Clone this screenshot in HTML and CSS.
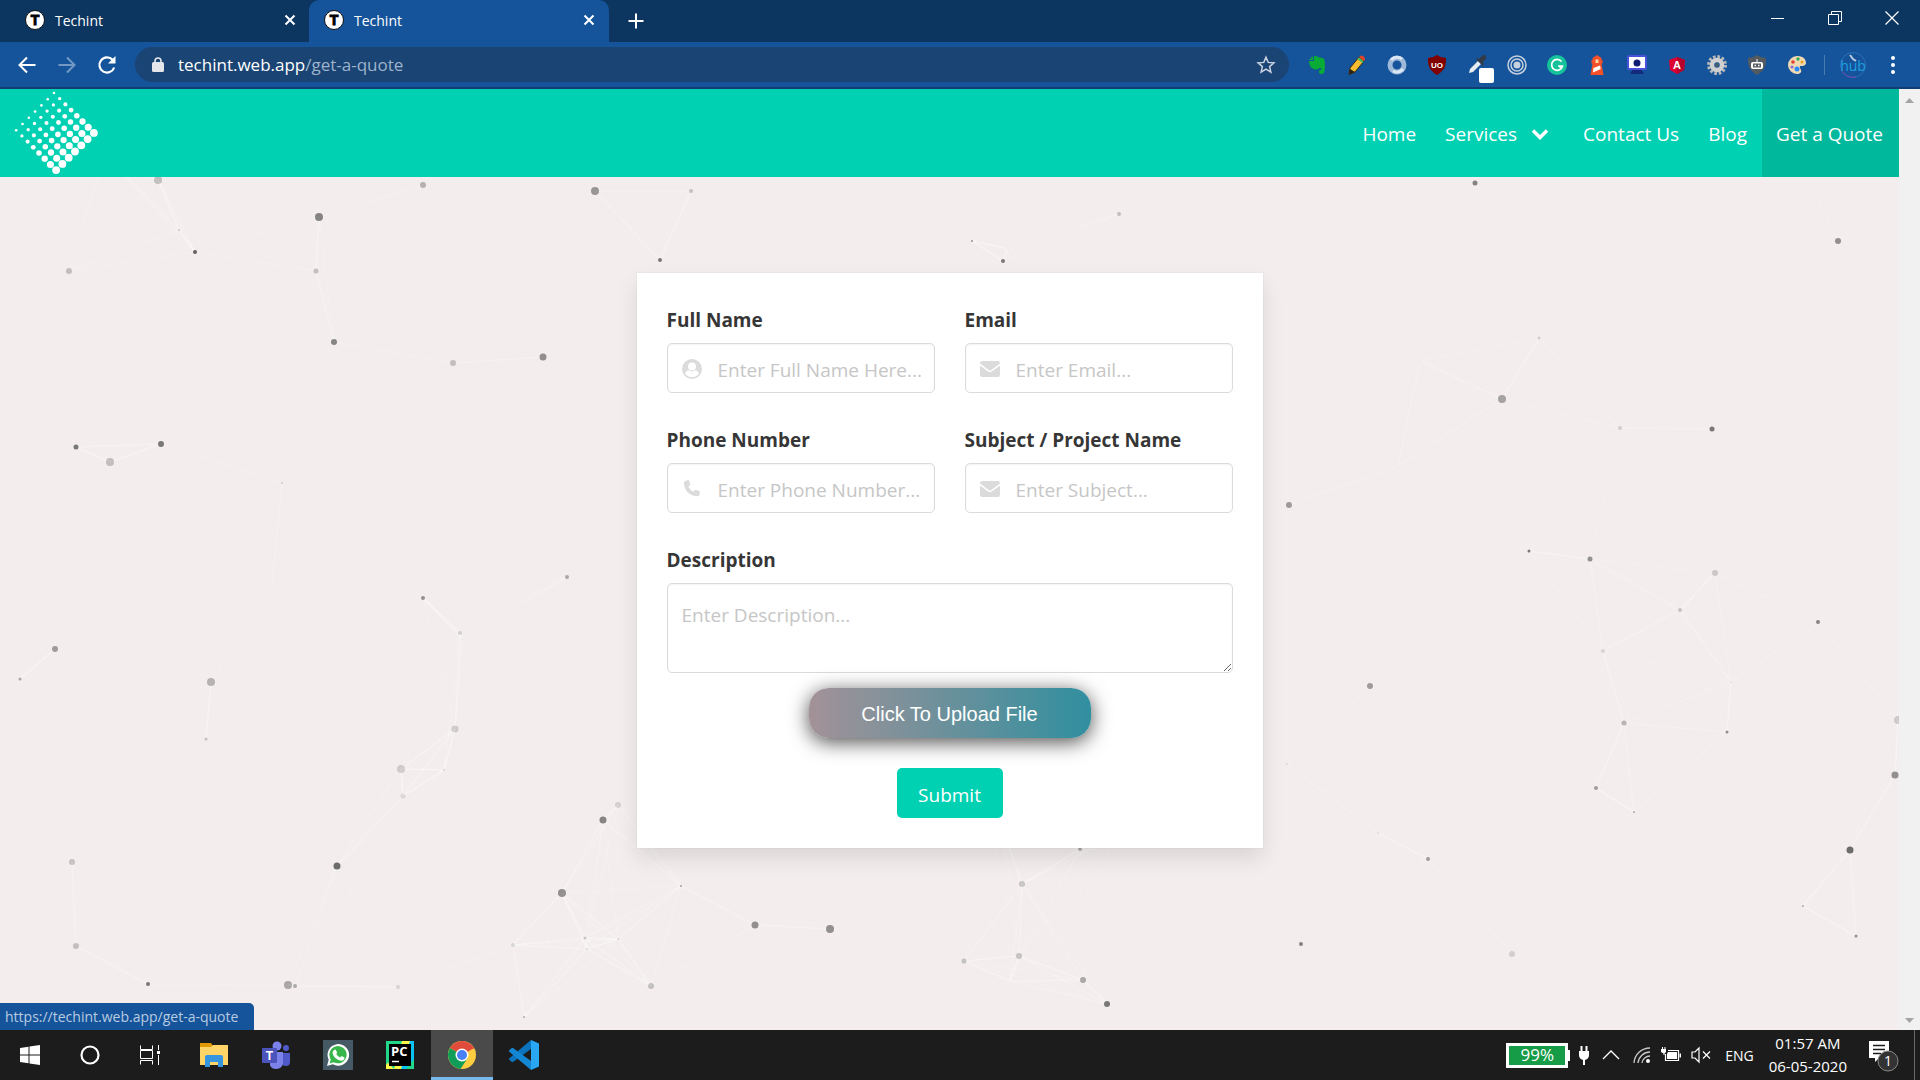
FILE: index.html
```html
<!DOCTYPE html>
<html lang="en">
<head>
<meta charset="utf-8">
<title>Techint</title>
<link rel="stylesheet" href="styles.css">
</head>
<body>
<svg class="defs" aria-hidden="true">
  <symbol id="cross" viewBox="0 0 12 12"><path d="M1.500 1.500l9 9M10.500 1.500l-9 9" stroke="#fff" stroke-width="2" fill="none"/></symbol>
  <symbol id="envelope" viewBox="0 0 20 16"><path d="M2 0h16a2 2 0 0 1 2 2v.6L11 9.200q-1 .6-2 0L0 2.600V2a2 2 0 0 1 2-2zM0 4.400l8.200 6q1.800 1.200 3.600 0l8.200-6V14a2 2 0 0 1-2 2H2a2 2 0 0 1-2-2z" fill="#dbdbdb"/></symbol>
</svg>

<div class="tabstrip">
  <div class="tab">
    <svg class="i20" viewBox="0 0 20 20"><circle cx="10" cy="10" r="9.500" fill="#fff" stroke="#111"/><text x="10" y="15" text-anchor="middle" font-family="Liberation Sans, sans-serif" font-weight="700" font-size="14" fill="#000" stroke="#000" stroke-width="1">T</text></svg><span>Techint</span>
    <button class="bare" aria-label="Close tab"><svg class="i12"><use href="#cross"/></svg></button>
  </div>
  <div class="tab active">
    <svg class="i20" viewBox="0 0 20 20"><circle cx="10" cy="10" r="9.500" fill="#fff" stroke="#111"/><text x="10" y="15" text-anchor="middle" font-family="Liberation Sans, sans-serif" font-weight="700" font-size="14" fill="#000" stroke="#000" stroke-width="1">T</text></svg><span>Techint</span>
    <button class="bare" aria-label="Close tab"><svg class="i12"><use href="#cross"/></svg></button>
  </div>
  <button class="bare newtab" aria-label="New tab"><svg class="i16" viewBox="0 0 16 16"><path d="M8 .5v15M.5 8h15" stroke="#fff" stroke-width="2"/></svg></button>
  <div class="window-controls">
    <button class="bare" aria-label="Minimize"><svg class="i14" viewBox="0 0 14 14"><path d="M0 7.500h13" stroke="#fff"/></svg></button>
    <button class="bare" aria-label="Restore"><svg class="i14" viewBox="0 0 14 14"><path d="M.5 3.500h10v10H.5zM3.500 3.500V.5h10v10h-3" stroke="#fff" fill="none"/></svg></button>
    <button class="bare" aria-label="Close"><svg class="i14" viewBox="0 0 14 14"><path d="M.5.500l13 13M13.500.500l-13 13" stroke="#fff" stroke-width="1.200"/></svg></button>
  </div>
</div>

<div class="toolbar">
  <div class="navigate">
    <button class="bare" aria-label="Back"><svg class="i20" viewBox="0 0 20 20"><path d="M18.500 10H3M10 2.500L2.500 10l7.500 7.500" stroke="#fff" stroke-width="2" fill="none"/></svg></button>
    <button class="bare" aria-label="Forward"><svg class="i20" viewBox="0 0 20 20"><path d="M1.500 10H17M10 2.500l7.500 7.500-7.500 7.500" stroke="#7398c4" stroke-width="2" fill="none"/></svg></button>
    <button class="bare" aria-label="Reload"><svg class="i20" viewBox="0 0 20 20"><path d="M17.200 12.500A7.600 7.600 0 1 1 15.600 4.800" stroke="#fff" stroke-width="2.200" fill="none"/><path d="M18.500 1v7.500H11z" fill="#fff"/></svg></button>
  </div>
  <div class="omnibox">
    <svg class="lock" viewBox="0 0 12 16"><rect x="0" y="5" width="12" height="10" rx="1.500" fill="#e4e6ea"/><path d="M3 6V4a3 3 0 0 1 6 0v2" stroke="#e4e6ea" stroke-width="1.600" fill="none"/></svg>
    <span class="url">techint.web.app<span>/get-a-quote</span></span>
    <svg class="i20" viewBox="0 0 20 20"><path d="M10 2.200l2.200 5.200 5.700.5-4.300 3.700 1.300 5.600L10 14.200l-4.900 3 1.300-5.600L2.100 7.900l5.700-.5z" stroke="#c9d2de" stroke-width="1.500" fill="none"/></svg>
  </div>
  <div class="extensions">
    <svg class="i20" viewBox="0 0 20 20"><path d="M6 1v4H2zM7 1.500c2-1.200 4 0 4.500 1 4 .2 5.500.8 6 2.500.8 4 .6 8-.2 12-.5 2.500-5 2.800-5.300.2-.2-2 1-2.700 2.500-2.500-.2-1.400-1-1.700-2.500-1.700-.5 1.500-2.500 1.700-4.500 1.200C3.500 13.600 2 9 2 6h5z" fill="#09ab37"/></svg>
    <svg class="i20" viewBox="0 0 20 20"><path d="M3 13L12 2l5 4L8 17l-6 2.500z" fill="#f6bd30" stroke="#3a2c10"/><path d="M12 2l2-1.500q4 .5 4 4L17 6z" fill="#e5422c"/><path d="M11 3.200l5 4" stroke="#39b66a" stroke-width="2"/><path d="M3 14l5 3-6 2.500z" fill="#2b2118"/></svg>
    <svg class="i20" viewBox="0 0 20 20"><circle cx="10" cy="10" r="7" fill="none" stroke="#9db8d8" stroke-width="5"/><path d="M4 5a8 8 0 0 1 11-1M16 14a8 8 0 0 1-10 2" stroke="#dbe7f3" stroke-width="3" fill="none"/></svg>
    <svg class="i20" viewBox="0 0 20 20"><path d="M10 0q4 3 9 3c0 8-1 12-9 17C2 15 1 11 1 3q5 0 9-3z" fill="#800000"/><text x="10" y="13" text-anchor="middle" font-family="Liberation Sans, sans-serif" font-weight="700" font-size="8" fill="#fff">UO</text></svg>
    <svg class="i20 over" viewBox="0 0 20 20"><path d="M2 18l1-4 8-8 3 3-8 8z" fill="#e8edf2"/><path d="M9 4l7 7 1-2-1.500-2L19 4q1-2-1-3.500T15 1l-3 3-2-1z" fill="#333c46"/><rect x="12" y="13" width="15" height="15" rx="2" fill="#fff"/></svg>
    <svg class="i20" viewBox="0 0 20 20"><g fill="none" stroke="#c5d1df" stroke-width="1.500"><circle cx="10" cy="10" r="9"/><circle cx="10" cy="10" r="6"/></g><circle cx="10" cy="10" r="3.500" fill="#c5d1df"/></svg>
    <svg class="i20" viewBox="0 0 20 20"><circle cx="10" cy="10" r="10" fill="#15c39a"/><path d="M14.500 6.500A5.500 5.500 0 1 0 15.500 11H11M12.500 12.500l3-1.500" stroke="#fff" stroke-width="1.700" fill="none"/></svg>
    <svg class="i20" viewBox="0 0 20 20"><path d="M5.500 3L10 0l4.500 3v2h1v3.500h-1L16.500 20h-13l2-11.500h-1V5h1z" fill="#f4502a"/><path d="M8.500 4.500h3V8h-3z" fill="#ffd9a8"/><path d="M6.500 13l6.500-2.500.7 3.500-7.700 3.500z" fill="#fff"/></svg>
    <svg class="i20" viewBox="0 0 20 20"><path d="M6 14h8l3 5H3z" fill="#162a7b"/><rect x="1" y="1" width="18" height="13" rx="1" fill="#fff" stroke="#4752d9" stroke-width="2"/><circle cx="10" cy="8" r="3.500" fill="#111d73"/></svg>
    <svg class="i20" viewBox="0 0 20 20"><path d="M10 2l8 3-1 10-7 4-7-4L2 5z" fill="#dd0031"/><path d="M10 2l8 3-1 10-7 4z" fill="#b8002d"/><text x="10" y="14" text-anchor="middle" font-family="Liberation Sans, sans-serif" font-weight="700" font-size="11" fill="#fff">A</text></svg>
    <svg class="i20" viewBox="0 0 20 20"><circle cx="10" cy="10" r="8" fill="none" stroke="#b9b9b9" stroke-width="4" stroke-dasharray="2.500 1.700"/><circle cx="10" cy="10" r="5" fill="none" stroke="#d0d0d0" stroke-width="4.500"/><circle cx="10" cy="10" r="2" fill="#4b5d70"/></svg>
    <svg class="i20" viewBox="0 0 20 20"><path d="M10 0q4 3 9 3c0 8-1 12-9 17C2 15 1 11 1 3q5 0 9-3z" fill="#555a60"/><rect x="4" y="7" width="12" height="7" rx="2" fill="#fff"/><path d="M10 7V4" stroke="#fff"/><rect x="6" y="8.500" width="8" height="4" fill="#555a60"/><path d="M7.500 10.500h1.500M11 10.500h1.500" stroke="#fff" stroke-width="1.500"/></svg>
    <svg class="i20" viewBox="0 0 20 20"><path d="M10 1c6-.5 9 3.500 9 7 0 2.500-3 3-5 3s-1 2 0 4-1 4-4 4A9 9 0 0 1 10 1z" fill="#f0d9b0"/><circle cx="6" cy="7" r="1.800" fill="#e23f35"/><circle cx="11" cy="4" r="1.700" fill="#34a853"/><circle cx="5" cy="12" r="1.600" fill="#8d6fd1"/><circle cx="15" cy="7" r="1.500" fill="#eba21b"/><circle cx="10" cy="14" r="2.500" fill="#2b8cff"/></svg>
  </div>
  <div class="profile">
    <svg class="i28" viewBox="0 0 28 28"><circle cx="14" cy="14" r="12.500" fill="none" stroke="#2b6fb8"/><path d="M3 20a12.500 12.500 0 0 0 14 6" stroke="#7548a8" fill="none"/><text x="14" y="20" text-anchor="middle" font-family="Open Sans, sans-serif" font-size="14" fill="#1ea0e0">hub</text><path d="M11 4l3 4 3 2" stroke="#b9cbe0" stroke-width="2" fill="none"/></svg>
    <button class="bare" aria-label="Menu"><svg class="dots" viewBox="0 0 4 18"><g fill="#fff"><circle cx="2" cy="2" r="2"/><circle cx="2" cy="9" r="2"/><circle cx="2" cy="16" r="2"/></g></svg></button>
  </div>
</div>

<div class="viewport">
  <div class="page">
    <svg class="particles" id="particles" aria-hidden="true"></svg>
    <header class="navbar">
      <a class="brand" href="#" aria-label="Techint"><svg class="logo" id="logo" viewBox="0 0 90 88" fill="#fff"></svg></a>
      <nav>
        <a href="#">Home</a>
        <a href="#" class="has-menu">Services <svg class="chevron" viewBox="0 0 18 12"><path d="M2 2.500l7 7 7-7" fill="none" stroke="#fff" stroke-width="3.500"/></svg></a>
        <a href="#">Contact Us</a>
        <a href="#">Blog</a>
        <a href="#" class="current">Get a Quote</a>
      </nav>
    </header>
    <main>
      <form class="card">
        <div class="field">
          <label for="name">Full Name</label>
          <div class="control"><svg class="i20" viewBox="0 0 20 20"><circle cx="10" cy="10" r="10" fill="#dbdbdb"/><path d="M3 14.500q1-3 3.500-3.500a5 5 0 0 0 7 0q2.500.5 3.500 3.500a8.300 8.300 0 0 1-14 0z" fill="#fff"/><circle cx="10" cy="7.500" r="4" fill="#fff"/></svg><input id="name" type="text" placeholder="Enter Full Name Here..."></div>
        </div>
        <div class="field">
          <label for="email">Email</label>
          <div class="control"><svg class="i20"><use href="#envelope"/></svg><input id="email" type="email" placeholder="Enter Email..."></div>
        </div>
        <div class="field">
          <label for="phone">Phone Number</label>
          <div class="control"><svg class="i20" viewBox="0 0 20 20"><path d="M2.500 2.500L6 1q1 0 1.200.8l1 3.500q0 .8-.7 1.200L6.300 7.500q1.500 3.900 5.200 5.200l1.200-1.500q.5-.6 1.200-.4l3.500 1.500q.8.400.6 1.200l-.8 3q-.3.800-1.200.8Q3 16.500 1.800 3.700q-.1-.8.700-1.200z" fill="#dbdbdb"/></svg><input id="phone" type="tel" placeholder="Enter Phone Number..."></div>
        </div>
        <div class="field">
          <label for="subject">Subject / Project Name</label>
          <div class="control"><svg class="i20"><use href="#envelope"/></svg><input id="subject" type="text" placeholder="Enter Subject..."></div>
        </div>
        <div class="field wide">
          <label for="description">Description</label>
          <textarea id="description" placeholder="Enter Description..."></textarea>
        </div>
        <div class="actions wide">
          <button type="button" class="upload">Click To Upload File</button>
          <button type="submit" class="submit">Submit</button>
        </div>
      </form>
    </main>
    <div class="status">https://techint.web.app/get-a-quote</div>
  </div>
  <div class="scrollbar">
    <svg class="arrow" viewBox="0 0 9 5"><path d="M0 5h9L4.500 0z" fill="#a3a3a3"/></svg>
    <svg class="arrow" viewBox="0 0 9 5"><path d="M0 0h9L4.500 5z" fill="#a3a3a3"/></svg>
  </div>
</div>

<footer class="taskbar">
  <div class="system-apps">
    <button class="bare" aria-label="Start"><svg class="i20" viewBox="0 0 20 20"><path d="M0 3l8.500-1.300V9.500H0zM9.500 1.500L20 0v9.500H9.500zM0 10.500h8.500v7.800L0 17zM9.500 10.500H20V20L9.500 18.500z" fill="#fff"/></svg></button>
    <button class="bare" aria-label="Search"><svg class="i20" viewBox="0 0 20 20"><circle cx="10" cy="10" r="8.500" fill="none" stroke="#fff" stroke-width="2.200"/></svg></button>
    <button class="bare" aria-label="Task view"><svg class="i20" viewBox="0 0 20 20"><path d="M.5.500v4h12v-4M.5 19.500v-4h12v4M.5 5.500h12v8H.5zM18.500 0v5M18.500 10v10" stroke="#fff" fill="none"/><rect x="17" y="6" width="3" height="3" fill="#fff"/></svg></button>
  </div>
  <div class="pinned-apps">
    <button class="bare" aria-label="File Explorer"><svg class="i28" viewBox="0 0 28 28"><path d="M0 2h11l2 3v4H0z" fill="#e09a06"/><path d="M0 6h11l2-2h15v20H0z" fill="#ffd568"/><path d="M5 26V16q0-2 2-2h14q2 0 2 2v10h-5v-5h-8v5z" fill="#3595de"/></svg></button>
    <button class="bare" aria-label="Teams"><svg class="i28" viewBox="0 0 28 28"><circle cx="24" cy="7" r="3" fill="#5059c9"/><path d="M19 12h9v9q0 4-4 4t-5-4z" fill="#5059c9"/><circle cx="15" cy="5" r="4.500" fill="#7b83eb"/><path d="M9 11h12v10q0 7-7 7t-6-7z" fill="#7b83eb"/><rect y="7" width="15" height="15" rx="1" fill="#4b53bc"/><text x="7.500" y="19" text-anchor="middle" font-family="Liberation Sans, sans-serif" font-weight="700" font-size="12" fill="#fff">T</text></svg></button>
    <button class="bare" aria-label="WhatsApp"><svg class="i30" viewBox="0 0 30 30"><rect width="30" height="30" fill="#455a64"/><path d="M4 26l1.700-6.200a10.800 10.800 0 1 1 4.200 4.400z" fill="#fff"/><path d="M6.600 23.400l1.200-4a8.600 8.600 0 1 1 3 2.800z" fill="#38b64a"/><path d="M11 10l1.600-.4 1.600 3.200-1 1.300q1.500 2.600 4 3.400l1.300-1.500 3 1.400q.4 3-3.500 3.400-7-1.400-8.500-7.800.2-2 1.500-3z" fill="#fff"/></svg></button>
    <button class="bare" aria-label="PyCharm"><svg class="i28" viewBox="0 0 28 28"><rect width="28" height="28" fill="#21d789"/><path d="M16 0h9l3 5v10L16 28H0v-4z" fill="#fcf84a"/><path d="M0 0h16L8 28 0 20z" fill="#21d789"/><path d="M24 0h4v18l-8 10h-5z" fill="#07c3f2"/><rect x="3" y="3" width="22" height="22" fill="#000"/><text x="5" y="15" font-family="Open Sans, sans-serif" font-weight="700" font-size="13" fill="#fff">PC</text><path d="M6 20.500h7" stroke="#fff" stroke-width="1.500"/></svg></button>
    <button class="bare running" aria-label="Chrome"><svg class="i28" viewBox="0 0 28 28"><circle cx="14" cy="14" r="14" fill="#ffcd40"/><path d="M14 14L1.900 7A14 14 0 0 1 26.100 7z" fill="#e14b3c"/><path d="M1.900 7a14 14 0 0 0 10.600 20.900L19.600 17 14 14z" fill="#109d58"/><path d="M14 7.500h12.400L26.100 7 14 5z" fill="#e14b3c"/><circle cx="14" cy="14" r="6.500" fill="#fff"/><circle cx="14" cy="14" r="5" fill="#4a80f5"/></svg></button>
    <button class="bare" aria-label="Visual Studio Code"><svg class="i30" viewBox="0 0 30 30"><path d="M22 0l8 3.500v23L22 30z" fill="#2aa7f2"/><path d="M22 0v9L4 22l-1 .2-3-2.700v-1z" fill="#0b74bd"/><path d="M22 30v-9L4 8l-1-.2-3 2.700v1z" fill="#1487d4"/></svg></button>
  </div>
  <div class="tray">
    <div class="battery">99%</div>
    <svg class="plug" viewBox="0 0 12 20"><path d="M1 6h10v4q0 4-4 5v5H5v-5q-4-1-4-5zM2.500 1h2v5h-2zM7.500 1h2v5h-2z" fill="#fff"/></svg>
    <svg class="i18" viewBox="0 0 18 18"><path d="M1 13l8-8 8 8" stroke="#fff" stroke-width="1.300" fill="none"/></svg>
    <svg class="i18 wifi" viewBox="0 0 18 18"><g fill="none" stroke="#c8c8c8" stroke-width="1.300"><path d="M1 17A16 16 0 0 1 17 2M5 17A12 12 0 0 1 17 6M9 17a8 8 0 0 1 8-7"/></g><circle cx="15" cy="15" r="2" fill="#fff"/></svg>
    <svg class="i20" viewBox="0 0 20 20"><path d="M4.500 9v6.500h13V5.500H7" stroke="#fff" stroke-width="1.200" fill="none"/><path d="M7 7h9v7H6V9zM18.500 8.500h1.500v4h-1.500zM0 4h5v3L3.500 8.500V10h-1V8.500L0 7zM1 2h1v2H1zM3.500 2h1v2h-1z" fill="#fff"/></svg>
    <svg class="i20" viewBox="0 0 20 20"><path d="M1 7h3l4-4v14l-4-4H1zM12 6.500l7 7M19 6.500l-7 7" stroke="#fff" stroke-width="1.200" fill="none"/></svg>
    <span class="lang">ENG</span>
    <div class="clock"><span>01:57 AM</span><span>06-05-2020</span></div>
    <svg class="notice" viewBox="0 0 32 36"><path d="M1 4h20v17H11l-4 4v-4H1z" fill="#fff"/><path d="M5 8.500h12M5 12.500h12M5 16.500h8" stroke="#1c1c1c" stroke-width="1.300"/><circle cx="20" cy="24" r="10" fill="#333" stroke="#888"/><text x="20" y="29" text-anchor="middle" font-family="Open Sans, sans-serif" font-size="14" fill="#fff">1</text></svg>
  </div>
</footer>
<script src="script.js"></script>
</body>
</html>
```

FILE: styles.css
```css
* { box-sizing: border-box; }
body {
  margin: 0;
  min-height: 100vh;
  display: grid;
  grid-template-columns: minmax(0, 1fr);
  grid-template-rows: auto auto 1fr auto;
  font-family: "Open Sans", "Noto Sans", sans-serif;
  font-size: 19px;
  color: #363636;
}
.defs { position: absolute; width: 0; height: 0; }
svg { flex: none; display: block; }
.i12 { width: 12px; height: 12px; }
.i14 { width: 14px; height: 14px; }
.i16 { width: 16px; height: 16px; }
.i18 { width: 18px; height: 18px; }
.i20 { width: 20px; height: 20px; }
.i28 { width: 28px; height: 28px; }
.i30 { width: 30px; height: 30px; }
.over { overflow: visible; }
.bare {
  border: 0;
  padding: 0;
  background: none;
  display: flex;
  align-items: center;
  justify-content: center;
}

/* Browser tabs */
.tabstrip {
  display: flex;
  height: 42px;
  background: #0c3560;
  color: #fff;
  font-size: 14px;
}
.tab {
  display: flex;
  align-items: center;
  gap: 10px;
  width: 300px;
  padding: 0 14px 2px 15px;
}
.tab:first-child { width: 309px; padding: 0 13px 2px 25px; }
.tab .bare { margin-left: auto; }
.tab.active { background: #15549a; border-radius: 10px 10px 0 0; }
.newtab { width: 54px; }
.window-controls { display: flex; margin-left: auto; height: 36px; }
.window-controls .bare { width: 57px; }

/* Address bar */
.toolbar {
  display: flex;
  align-items: center;
  height: 47px;
  background: #15549a;
  border-bottom: 2px solid #103d72;
}
.navigate { display: flex; gap: 20px; width: 135px; padding-left: 17px; }
.omnibox {
  flex: 1;
  display: flex;
  align-items: center;
  height: 35px;
  padding: 0 13px 0 17px;
  border-radius: 18px;
  background: #1a4474;
}
.lock { width: 12px; height: 16px; }
.url { flex: 1; padding-left: 14px; color: #fff; font-size: 17px; }
.url span { color: #9fb3cb; }
.extensions { display: flex; gap: 20px; padding: 0 17px 0 18px; }
.profile {
  display: flex;
  align-items: center;
  gap: 24px;
  padding-right: 25px;
}
.profile::before { content: ""; width: 1px; height: 20px; background: #4a7ab2; margin-right: -10px; }
.dots { width: 4px; height: 18px; }

/* Web page */
.viewport { display: flex; }
.page {
  flex: 1;
  position: relative;
  display: flex;
  flex-direction: column;
  min-width: 0;
  overflow: hidden;
  background: #f3eded;
}
.particles { position: absolute; inset: 0; width: 100%; height: 100%; }
.navbar {
  position: relative;
  display: flex;
  justify-content: space-between;
  height: 88px;
  background: #00d1b2;
}
.brand { padding-left: 10px; }
.logo { width: 90px; height: 88px; }
nav { display: flex; }
nav a {
  display: flex;
  align-items: center;
  gap: 14px;
  padding: 2px 15px 0 14px;
  color: #fff;
  text-decoration: none;
}
nav .has-menu { padding-right: 20px; }
nav .current { padding-right: 16px; background: #00b89c; }
.chevron { width: 18px; height: 12px; }
main { position: relative; padding: 96px 20px; }
.card {
  display: grid;
  grid-template-columns: repeat(2, minmax(0, 1fr));
  gap: 30px;
  max-width: 626px;
  margin: 0 auto;
  padding: 30px;
  background: #fff;
  box-shadow: 0 10px 20px rgba(10, 10, 10, .1), 0 0 0 1px rgba(10, 10, 10, .02);
}
.wide { grid-column: 1 / -1; }
.field label { display: block; margin-bottom: 8px; padding-top: 2px; line-height: 30px; font-weight: 700; }
.control, textarea {
  border: 1px solid #dbdbdb;
  border-radius: 5px;
  box-shadow: inset 0 1px 2px rgba(10, 10, 10, .05);
}
.control { display: flex; align-items: center; gap: 16px; height: 50px; padding: 2px 0 0 14px; }
.control input { flex: 1; min-width: 0; height: 100%; padding: 1px 0 0; border: 0; background: none; font: inherit; }
::placeholder { color: #c6c6c6; opacity: 1; }
textarea { display: block; width: 100%; height: 90px; padding: 18px 14px; font: inherit; resize: vertical; }
.actions { display: flex; flex-direction: column; align-items: center; gap: 30px; margin-top: -15px; }
.upload, .submit { height: 50px; border: 0; color: #fff; }
.upload {
  width: 282px;
  padding: 2px 0 0;
  border-radius: 20px;
  background: linear-gradient(90deg, #a39298, #308f9f);
  box-shadow: 0 4px 20px rgba(0, 0, 0, .7);
  font: 20px "Liberation Sans", Arial, sans-serif;
}
.submit { width: 106px; padding: 3px 0 0; border-radius: 5px; background: #00d1b2; font: inherit; }
.status {
  position: absolute;
  left: 0;
  bottom: 0;
  height: 27px;
  padding: 0 16px 0 5px;
  border-top-right-radius: 5px;
  background: #15549a;
  color: #b9cbe0;
  font-size: 14px;
  line-height: 27px;
}
.scrollbar {
  display: flex;
  flex-direction: column;
  justify-content: space-between;
  align-items: center;
  width: 21px;
  padding: 9px 0 7px;
  background: #f1f1f1;
}
.arrow { width: 9px; height: 5px; }

/* Windows taskbar */
.taskbar { display: flex; height: 50px; background: #1c1c1c; color: #fff; }
.system-apps, .pinned-apps { display: flex; }
.system-apps .bare { width: 60px; }
.pinned-apps { padding-left: 3px; }
.pinned-apps .bare { width: 62px; }
.running { background: #4a4a4a; border-bottom: 3px solid #76b9ed; padding-top: 3px; }
.tray {
  display: flex;
  align-items: center;
  gap: 10px;
  margin-left: auto;
  margin-right: 5px;
  padding-right: 14px;
  border-right: 1px solid #6a6a6a;
  font-size: 14px;
}
.battery {
  position: relative;
  width: 62px;
  height: 25px;
  border: 3px solid #fff;
  background: #169b46;
  font-size: 17px;
  line-height: 18px;
  text-align: center;
}
.battery::after { content: ""; position: absolute; right: -5px; top: 4px; width: 2px; height: 11px; background: #fff; }
.plug { width: 12px; height: 20px; margin-right: 2px; }
.wifi { margin-left: 3px; }
.lang { margin: 0 5px 0 4px; }
.clock { display: flex; flex-direction: column; font-size: 15px; line-height: 23px; text-align: center; }
.notice { width: 32px; height: 36px; margin-left: 11px; }
```

FILE: script.js
```javascript
const SVG_NS = "http://www.w3.org/2000/svg";

function add(parent, name, attributes) {
  const node = document.createElementNS(SVG_NS, name);
  for (const key in attributes) node.setAttribute(key, attributes[key]);
  parent.appendChild(node);
}

// Logo: a lattice of dots that grow towards the lower right edge.
const logo = document.getElementById("logo");
for (let i = 0; i < 8; i++) {
  for (let j = 0; j < 7; j++) {
    add(logo, "circle", {
      cx: 44 + i * 5.7 - j * 6.3,
      cy: 4 + i * 5.7 + j * 6.2,
      r: 1.3 + i * 0.37
    });
  }
}

// Particles: x, y, radius, opacity.
const particles = [
  [158,91,4,.2],[179,141,1,.2],[195,163,2,.6],[69,182,3,.2],[319,128,4,.45],[316,182,2.5,.2],
  [334,253,3,.45],[423,96,3,.25],[595,102,4,.37],[453,274,3,.2],[543,268,3.5,.4],[76,358,2.5,.5],
  [161,355,3,.5],[110,373,4,.2],[282,394,1,.15],[272,495,.5,.1],[567,488,2,.3],[423,509,2,.4],
  [460,544,2,.15],[462,550,1,.05],[455,640,3.5,.15],[401,680,4,.15],[444,681,1,.15],[403,707,2.5,.1],
  [55,560,3,.35],[20,590,1.5,.3],[211,593,4,.25],[206,650,1.5,.2],[337,777,3.5,.55],[72,773,3,.18],
  [76,857,3,.2],[148,895,2,.5],[288,896,4,.3],[295,897,2,.3],[398,898,2,.12],[513,856,2,.12],
  [524,928,1,.3],[562,804,4,.4],[585,849,1.5,.2],[618,850,1,.15],[587,860,1,.15],[603,731,3.5,.45],
  [618,716,3,.12],[681,797,1,.35],[755,836,3.5,.4],[830,840,4,.4],[651,897,3,.2],[964,872,2.5,.2],
  [1019,867,3,.2],[1010,892,.5,.05],[1022,795,3,.18],[1083,891,3,.3],[1107,915,3,.5],[1080,760,2,.3],
  [1475,94,2.5,.45],[1838,152,3,.4],[1539,249,1.5,.15],[1420,272,.5,.1],[1502,310,4,.32],[1620,339,2,.15],
  [1712,340,2.5,.5],[1289,416,3,.35],[1398,377,.5,.05],[1529,462,1.5,.5],[1590,470,2.5,.4],[1715,484,3,.17],
  [1680,521,2,.2],[1818,533,2,.45],[1603,562,2,.12],[1731,593,1,.1],[1624,634,2.5,.25],[1727,643,1.5,.4],
  [1596,699,2,.35],[1634,723,1,.3],[1370,597,3,.35],[1287,675,1,.1],[1378,744,1,.1],[1428,770,2,.35],
  [1301,855,2,.45],[1512,865,3,.13],[1898,631,4,.15],[1895,686,3.5,.4],[1850,761,3.5,.55],[1803,817,1,.3],
  [1856,847,1.5,.4],[660,171,2,.5],[1003,172,2,.5],[691,102,2,.2],[972,152,1,.4],[1119,125,2,.2],
  [1008,160,1,.05],[105,66,2,.2],[1003,740,2,.2],[1110,750,2,.2],[1790,50,2,.2]
];
const LINK_DISTANCE = 187;
const field = document.getElementById("particles");
particles.forEach(([x1, y1], index) => {
  particles.slice(index + 1).forEach(([x2, y2]) => {
    const distance = Math.hypot(x1 - x2, y1 - y2);
    if (distance < LINK_DISTANCE) {
      add(field, "line", {
        x1, y1, x2, y2,
        stroke: "#fff",
        "stroke-width": 1.5,
        "stroke-opacity": 0.5 * (1 - distance / LINK_DISTANCE)
      });
    }
  });
});
particles.forEach(([x, y, r, opacity]) => {
  add(field, "circle", { cx: x, cy: y, r: r, fill: "#000", "fill-opacity": opacity });
});
```
